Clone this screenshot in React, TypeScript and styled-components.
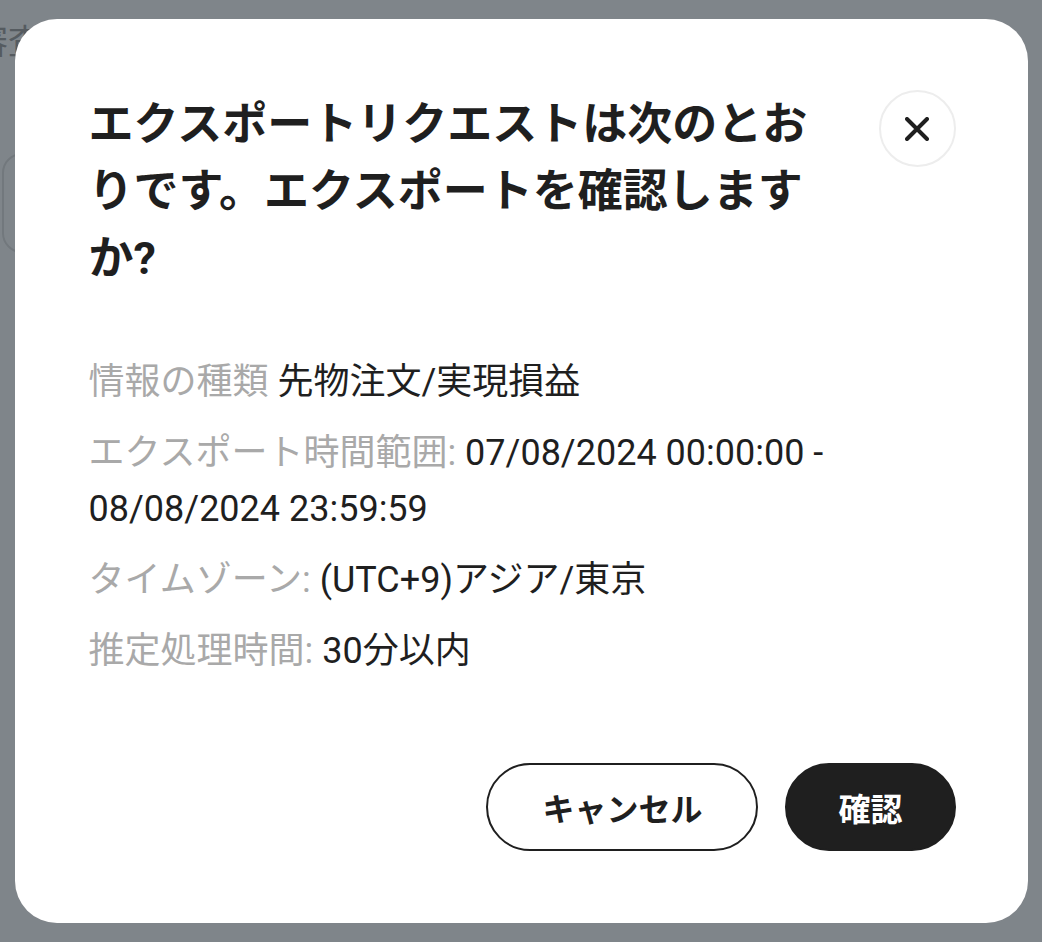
import styled, { createGlobalStyle } from "styled-components";

const GlobalStyle = createGlobalStyle`
  html, body {
    margin: 0;
    padding: 0;
    background: #ffffff;
    font-family: Roboto, "Noto Sans CJK JP", sans-serif;
  }
`;

const rows = [
  { label: "情報の種類", value: "先物注文/実現損益" },
  { label: "エクスポート時間範囲:", value: "07/08/2024 00:00:00 - 08/08/2024 23:59:59" },
  { label: "タイムゾーン:", value: "(UTC+9)アジア/東京" },
  { label: "推定処理時間:", value: "30分以内" },
];

const CloseIcon = () => (
  <svg width="24" height="24" viewBox="0 0 24 24" fill="none">
    <path d="M2 2 22 22M22 2 2 22" stroke="#1f1f1f" strokeWidth="4" strokeLinecap="round" />
  </svg>
);

const App = () => {
  return (
    <>
      <GlobalStyle />
      <Page>
        <PageTitle>審査</PageTitle>
        <FakeInput />
      </Page>
      <Overlay>
        <Dialog>
          <Header>
            <Title>エクスポートリクエストは次のとおりです。エクスポートを確認しますか?</Title>
            <CloseButton aria-label="close">
              <CloseIcon />
            </CloseButton>
          </Header>
          <InfoList>
            {rows.map((row) => (
              <InfoRow key={row.label}>
                <Label>{row.label}</Label> {row.value}
              </InfoRow>
            ))}
          </InfoList>
          <Actions>
            <ActionButton $pad={54}>キャンセル</ActionButton>
            <ActionButton $primary $pad={51}>
              確認
            </ActionButton>
          </Actions>
        </Dialog>
      </Overlay>
    </>
  );
};

export default App;

const Page = styled.div`
  min-height: 100vh;
  padding-top: 18px;
  overflow: hidden;
`;

const PageTitle = styled.div`
  margin-left: -26px;
  font-size: 34px;
  line-height: 48px;
  color: #aaaaaa;
`;

const FakeInput = styled.div`
  margin-top: 87px;
  margin-left: 2px;
  width: 300px;
  height: 96px;
  border: 2px solid #e4e4e4;
  border-radius: 20px;
`;

const Overlay = styled.div`
  position: fixed;
  inset: 0;
  background: rgba(0, 12, 22, 0.5);
  display: flex;
  align-items: center;
  justify-content: center;
`;

const Dialog = styled.div`
  width: 1013px;
  box-sizing: border-box;
  padding: 72px 72px 72px 74px;
  background: #ffffff;
  border-radius: 42px;
  display: flex;
  flex-direction: column;
`;

const Header = styled.div`
  display: flex;
  align-items: flex-start;
  gap: 62px;
`;

const Title = styled.h2`
  flex: 1;
  margin: 0;
  font-size: 45px;
  line-height: 67px;
  font-weight: 700;
  color: #1f1f1f;
`;

const CloseButton = styled.button`
  flex-shrink: 0;
  width: 77px;
  height: 77px;
  margin-top: -1px;
  padding: 0;
  border: 2px solid #ededed;
  border-radius: 50%;
  background: #ffffff;
  display: flex;
  align-items: center;
  justify-content: center;
  cursor: pointer;
`;

const InfoList = styled.div`
  margin-top: 62px;
  display: flex;
  flex-direction: column;
  gap: 15px;
`;

const InfoRow = styled.div`
  font-size: 36px;
  line-height: 56px;
  color: #1f1f1f;
`;

const Label = styled.span`
  color: #a9a9a9;
`;

const Actions = styled.div`
  margin-top: 84px;
  display: flex;
  justify-content: flex-end;
  gap: 27px;
`;

const ActionButton = styled.button<{ $primary?: boolean; $pad: number }>`
  height: 88px;
  padding: 0 ${(p) => p.$pad}px;
  border: 2px solid #1f1f1f;
  border-radius: 44px;
  background: ${(p) => (p.$primary ? "#1f1f1f" : "#ffffff")};
  color: ${(p) => (p.$primary ? "#ffffff" : "#1f1f1f")};
  font-family: Roboto, "Noto Sans CJK JP", sans-serif;
  font-size: 32px;
  font-weight: 700;
  cursor: pointer;
`;
